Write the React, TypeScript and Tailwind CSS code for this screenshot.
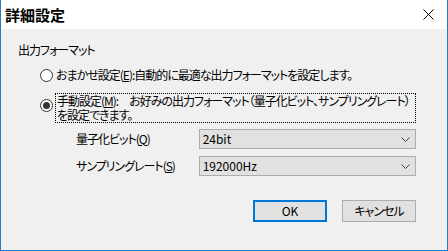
import React, { useState } from 'react';

const Radio: React.FC<{ checked: boolean }> = ({ checked }) => (
  <span className="w-[13px] h-[13px] shrink-0 rounded-full border border-[#333333] bg-white flex items-center justify-center">
    {checked && <span className="w-[7px] h-[7px] rounded-full bg-[#333333]" />}
  </span>
);

const Combo: React.FC<{ value: string }> = ({ value }) => (
  <div className="w-[218px] h-[20px] border border-[#adadad] bg-[#e1e1e1] flex items-center justify-between pl-[3px] pr-[5px]">
    <span className="leading-[14px] tracking-normal">{value}</span>
    <svg width="9" height="5" viewBox="0 0 9 5" className="text-[#444]">
      <path d="M0.5 0.5 L4.5 4.5 L8.5 0.5" fill="none" stroke="currentColor" strokeWidth="1" />
    </svg>
  </div>
);

const App: React.FC = () => {
  const [mode, setMode] = useState<'auto' | 'manual'>('manual');

  return (
    <div
      className="w-[448px] h-[251px] flex flex-col border-x border-b border-[#2b79c2] text-black text-[12px] tracking-[-1px] [font-feature-settings:'palt']"
      style={{ fontFamily: '"Noto Sans CJK JP", "Noto Sans", sans-serif' }}
    >
      {/* Title bar */}
      <div className="h-[29px] bg-white flex items-center justify-between pl-[4px] pr-[13px]">
        <span className="text-[15px] font-bold leading-none tracking-normal">詳細設定</span>
        <svg width="11" height="11" viewBox="0 0 11 11">
          <path d="M0.5 0.5 L10.5 10.5 M10.5 0.5 L0.5 10.5" stroke="#000" strokeWidth="1" />
        </svg>
      </div>

      {/* Body */}
      <div className="flex-1 bg-[#f0f0f0] pl-[17px] pr-[31px] pt-[13px] flex flex-col">
        <div className="leading-[16px]">出力フォーマット</div>

        <div className="pl-[22px] flex flex-col">
          <div
            className="mt-[9px] flex items-center gap-[3px] leading-[16px] whitespace-nowrap cursor-default"
            onClick={() => setMode('auto')}
          >
            <Radio checked={mode === 'auto'} />
            <span>おまかせ設定(<u>E</u>):自動的に最適な出力フォーマットを設定します。</span>
          </div>

          <div
            className="mt-[10px] flex items-start gap-[2px] cursor-default"
            onClick={() => setMode('manual')}
          >
            <span className="mt-[6px]">
              <Radio checked={mode === 'manual'} />
            </span>
            <span className="flex-1 border border-dotted border-[#000] leading-[14px] pl-[1px] whitespace-nowrap">
              手動設定(<u>M</u>):　お好みの出力フォーマット（量子化ビット、サンプリングレート）
              <br />
              を設定できます。
            </span>
          </div>

          <div className="pl-[36px] mt-[6px] flex flex-col gap-[7px]">
            <div className="flex items-center">
              <span className="w-[123px]">量子化ビット(<u>Q</u>)</span>
              <Combo value="24bit" />
            </div>
            <div className="flex items-center">
              <span className="w-[123px]">サンプリングレート(<u>S</u>)</span>
              <Combo value="192000Hz" />
            </div>
          </div>
        </div>

        {/* Buttons */}
        <div className="mt-[24px] flex justify-end gap-[15px]">
          <button className="w-[74px] h-[22px] border-2 border-[#0078d7] bg-[#e1e1e1] flex items-center justify-center leading-none tracking-normal">
            OK
          </button>
          <button className="w-[74px] h-[22px] border border-[#adadad] bg-[#e1e1e1] flex items-center justify-center leading-none">
            キャンセル
          </button>
        </div>
      </div>
    </div>
  );
};

export default App;
